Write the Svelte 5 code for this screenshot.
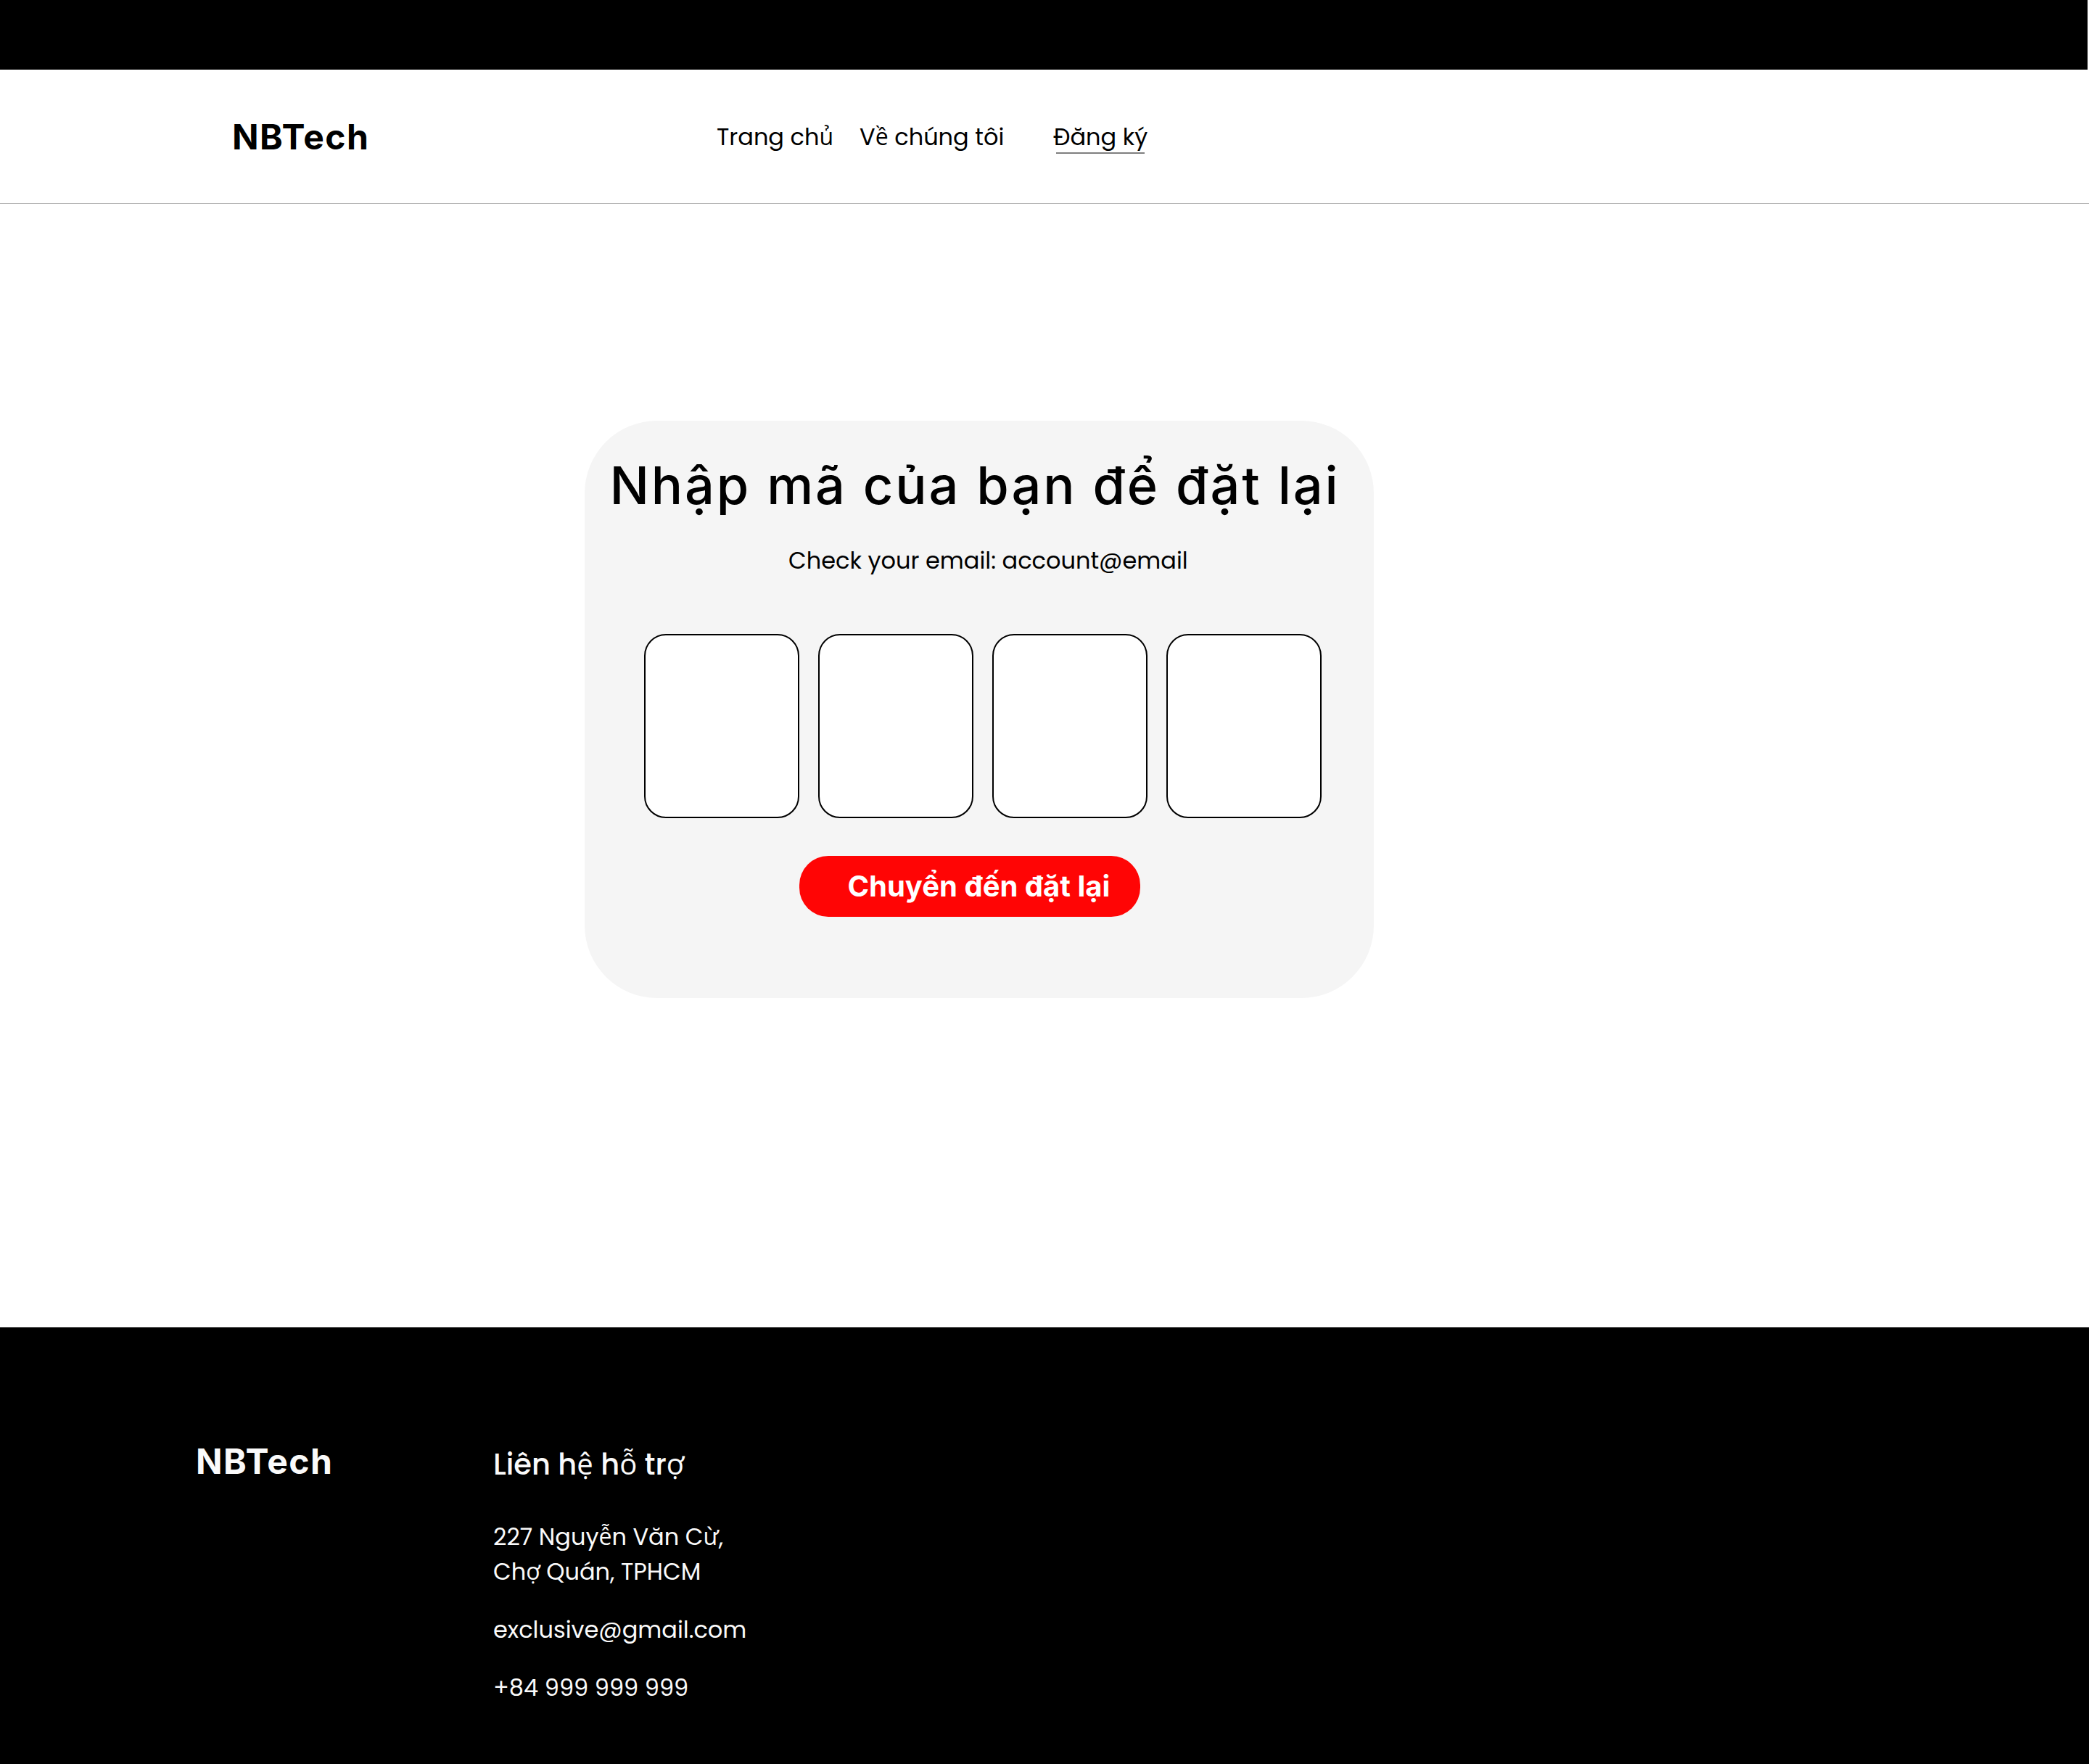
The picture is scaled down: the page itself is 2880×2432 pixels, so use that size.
<script>
  const navLinks = [
    { label: 'Trang chủ', href: '#home' },
    { label: 'Về chúng tôi', href: '#about' },
    { label: 'Đăng ký', href: '#signup', current: true }
  ];

  let digits = $state(['', '', '', '']);
</script>

<div class="page">
  <div class="topbar"></div>

  <header class="header">
    <a class="logo" href="#home">NBTech</a>
    <nav class="nav" aria-label="Menu">
      {#each navLinks as link}
        <a
          class="nav-link"
          class:current={link.current}
          href={link.href}
          aria-current={link.current ? 'page' : undefined}>{link.label}</a>
      {/each}
    </nav>
  </header>

  <main class="main">
    <form class="card" onsubmit={(event) => event.preventDefault()}>
      <h1 class="title">Nhập mã của bạn để đặt lại</h1>
      <p class="hint">Check your email: account@email</p>
      <div class="code">
        {#each digits as _, i}
          <input
            class="digit"
            type="text"
            inputmode="numeric"
            maxlength="1"
            aria-label={`Số thứ ${i + 1}`}
            bind:value={digits[i]} />
        {/each}
      </div>
      <button class="submit" type="submit">Chuyển đến đặt lại</button>
    </form>
  </main>

  <footer class="footer">
    <a class="logo" href="#home">NBTech</a>
    <section class="support">
      <h2 class="support-title">Liên hệ hỗ trợ</h2>
      <address class="contact">
        <p>227 Nguyễn Văn Cừ,<br />Chợ Quán, TPHCM</p>
        <a href="mailto:exclusive@gmail.com">exclusive@gmail.com</a>
        <a href="tel:+84999999999">+84 999 999 999</a>
      </address>
    </section>
  </footer>
</div>

<style>
  :global(body) {
    margin: 0;
    background: #fff;
  }

  .page {
    display: flex;
    flex-direction: column;
    min-height: 100vh;
    font-family: Poppins, 'Open Sans', sans-serif;
    font-size: 32px;
    line-height: 48px;
    color: #000;
  }

  .page * {
    box-sizing: border-box;
  }

  a {
    color: inherit;
    text-decoration: none;
  }

  h1,
  h2,
  p {
    margin: 0;
  }

  .topbar {
    height: 96px;
    margin-right: 2px;
    background: #000;
  }

  .header {
    display: flex;
    align-items: center;
    padding: 69px 64px 67px 320px;
    border-bottom: 1px solid #b3b3b3;
  }

  .logo {
    flex-shrink: 0;
    font-family: Inter, sans-serif;
    font-size: 48px;
    font-weight: 700;
    line-height: 48px;
    letter-spacing: 0.03em;
  }

  .header .logo {
    width: 668px;
  }

  .nav {
    display: flex;
    gap: 36px;
  }

  .nav-link {
    position: relative;
    white-space: nowrap;
  }

  .current {
    margin-left: 32px;
  }

  .current::after {
    content: '';
    position: absolute;
    right: 4px;
    bottom: 1px;
    left: 4px;
    height: 2px;
    background: #7f7f7f;
  }

  .main {
    flex: 1 0 auto;
    padding: 299px 28% 454px;
  }

  .card {
    width: 1088px;
    padding: 41px 34px 112px;
    border-radius: 100px;
    background: #f5f5f5;
  }

  .title {
    font-family: Inter, sans-serif;
    font-size: 72px;
    font-weight: 500;
    line-height: 96px;
    letter-spacing: 0.04em;
    white-space: nowrap;
  }

  .hint {
    margin-top: 32px;
    padding-left: 24px;
    text-align: center;
  }

  .code {
    display: grid;
    grid-template-columns: repeat(4, 1fr);
    gap: 26px;
    margin: 77px 38px 0 48px;
  }

  .digit {
    width: 100%;
    height: 254px;
    padding: 0;
    border: 2px solid #000;
    border-radius: 30px;
    background: #fff;
    font: 500 96px Inter, sans-serif;
    text-align: center;
  }

  .submit {
    display: block;
    width: 470px;
    height: 84px;
    margin: 52px 0 0 262px;
    padding: 0 42px 2px 66px;
    border: 0;
    border-radius: 40px;
    background: #ff0505;
    color: #fff;
    font: 700 40px Inter, sans-serif;
    white-space: nowrap;
    cursor: pointer;
  }

  .footer {
    display: flex;
    padding: 161px 64px 81px 270px;
    background: #000;
    color: #fafafa;
  }

  .footer .logo {
    width: 410px;
  }

  .support-title {
    font-size: 40px;
    font-weight: 500;
    line-height: 56px;
  }

  .contact {
    display: flex;
    flex-direction: column;
    align-items: flex-start;
    gap: 32px;
    margin-top: 48px;
    font-style: normal;
  }
</style>
